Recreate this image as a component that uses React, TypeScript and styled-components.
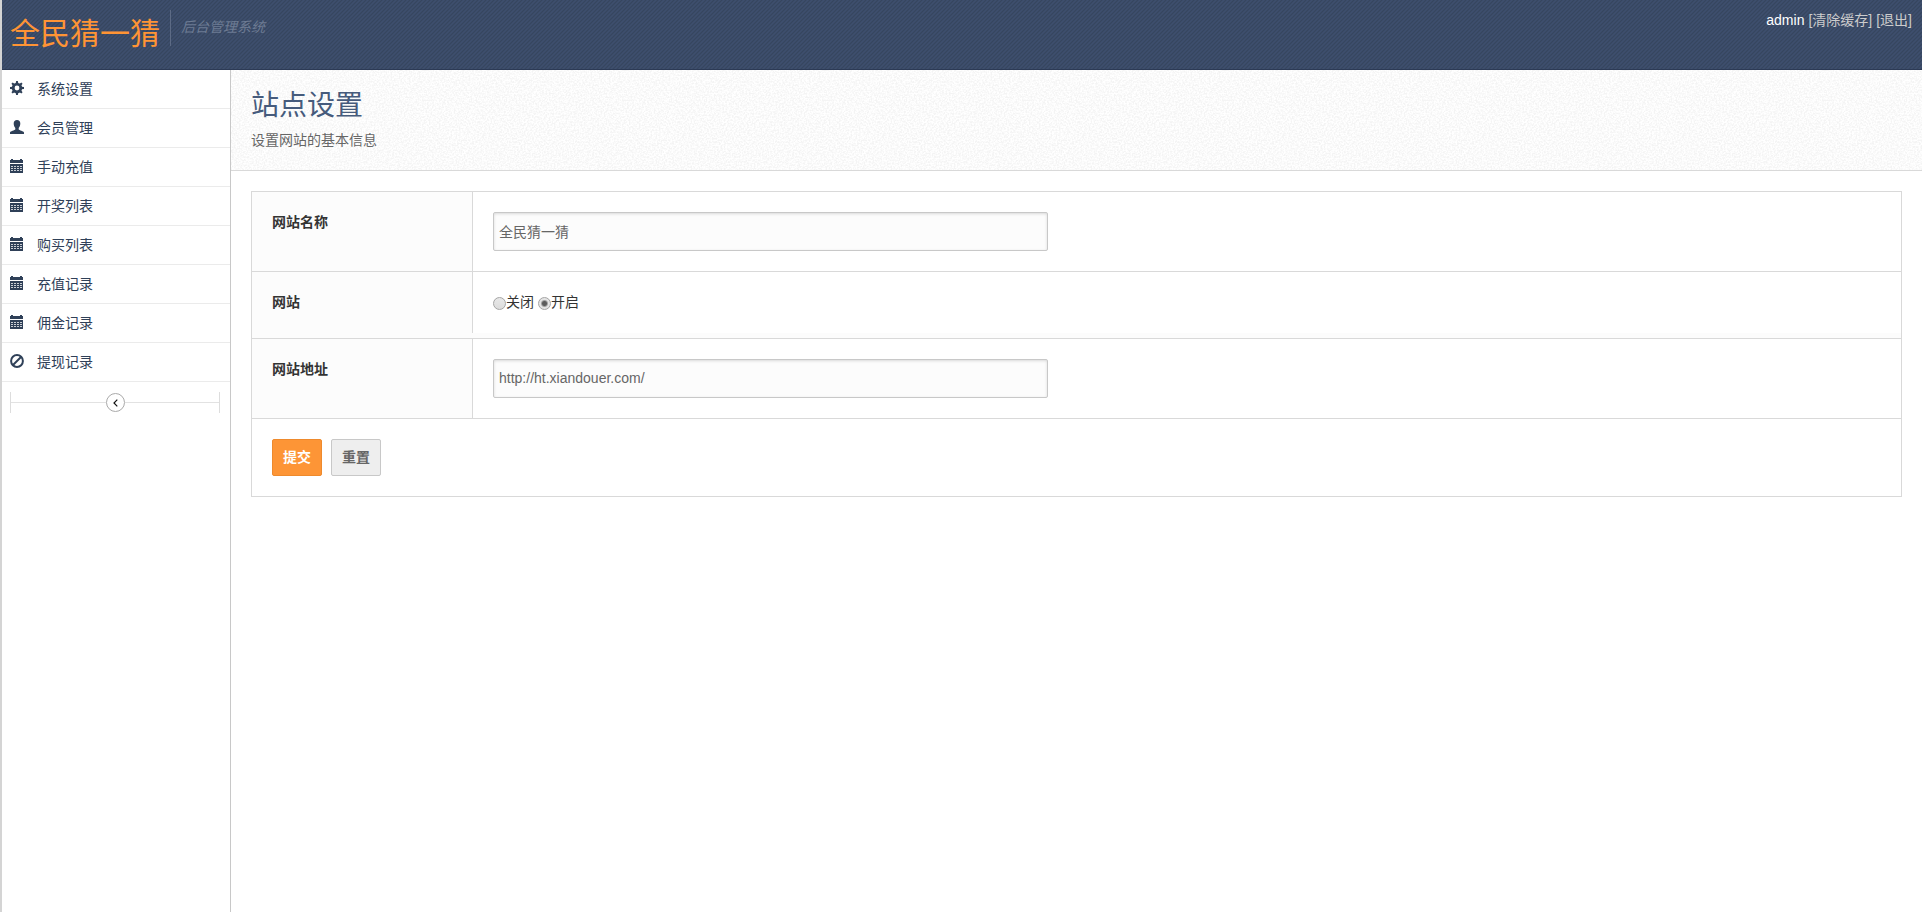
import React from 'react';
import styled, { createGlobalStyle } from 'styled-components';

const noise = encodeURIComponent(
  `<svg xmlns="http://www.w3.org/2000/svg" width="200" height="200"><filter id="n" x="0" y="0" width="100%" height="100%" color-interpolation-filters="sRGB"><feTurbulence type="fractalNoise" baseFrequency="0.6" numOctaves="2" stitchTiles="stitch"/><feColorMatrix values="0 0 0 0 0.955  0 0 0 0 0.955  0 0 0 0 0.955  3 0 0 0 -1.1"/></filter><rect width="200" height="200" filter="url(#n)"/></svg>`
);

const twill = encodeURIComponent(
  `<svg xmlns="http://www.w3.org/2000/svg" width="4" height="4" shape-rendering="crispEdges"><path fill="#36465f" d="M0 3h1v1H0zM1 2h1v1H1zM2 1h1v1H2zM3 0h1v1H3z"/><path fill="#3e4f6e" d="M0 1h1v1H0zM1 0h1v1H1zM2 3h1v1H2zM3 2h1v1H3z"/></svg>`
);

const GlobalStyle = createGlobalStyle`
  * { box-sizing: border-box; }
  body {
    margin: 0;
    background: #fff;
    color: #333;
    font: 14px/21px "Liberation Sans", Arial, "Noto Sans CJK SC", sans-serif;
  }
  a { text-decoration: none; }
`;

const Page = styled.div`
  min-height: 100vh;
  display: flex;
  flex-direction: column;
  border-left: 2px solid #d4d4d4;
`;

const Header = styled.header`
  height: 70px;
  display: flex;
  align-items: flex-start;
  padding: 10px 10px 0 8px;
  border-bottom: 1px solid #2c3a55;
  background: #3b4b68 url("data:image/svg+xml,${twill}");
`;

const Logo = styled.h1`
  margin: 0;
  padding-right: 10px;
  font-size: 30px;
  font-weight: 400;
  line-height: 48px;
  color: #ff9435;
`;

const Tagline = styled.span`
  height: 36px;
  padding: 7px 0 0 10px;
  border-left: 1px solid #5d6b85;
  font-style: italic;
  color: #6d7b93;
`;

const Account = styled.nav`
  margin-left: auto;
  display: flex;
  gap: 4px;
  color: #fff;
`;

const AccountLink = styled.a`
  color: #ccc;
`;

const Body = styled.div`
  flex: 1;
  display: flex;
`;

const Sidebar = styled.aside`
  flex: 0 0 229px;
  border-right: 1px solid #c8c8c8;
`;

const Menu = styled.ul`
  margin: 0;
  padding: 0;
  list-style: none;
`;

const MenuLink = styled.a`
  display: flex;
  align-items: center;
  gap: 13px;
  height: 39px;
  padding-left: 8px;
  border-bottom: 1px solid #ebebeb;
  color: #2f4058;
  svg { display: block; margin-bottom: 2px; }
`;

const Collapse = styled.div`
  display: flex;
  align-items: center;
  height: 21px;
  margin: 10px 10px 0 8px;
  border: solid #ddd;
  border-width: 0 1px;
  &::before, &::after {
    content: "";
    flex: 1;
    height: 1px;
    background: #e2e2e2;
  }
`;

const CollapseButton = styled.button`
  display: grid;
  place-items: center;
  width: 19px;
  height: 19px;
  padding: 0;
  border: 1px solid #aaa;
  border-radius: 50%;
  background: #fff;
  color: #111;
`;

const Main = styled.main`
  flex: 1;
  min-width: 0;
`;

const PageHead = styled.div`
  height: 101px;
  padding: 15px 20px 0;
  border-bottom: 1px solid #d9d9d9;
  background: #fff url("data:image/svg+xml,${noise}");
`;

const Title = styled.h2`
  margin: 0;
  font-size: 28px;
  font-weight: 400;
  line-height: 42px;
  color: #465b7c;
`;

const Lead = styled.p`
  margin: 3px 0 0;
  color: #666;
`;

const Form = styled.form`
  margin: 20px;
  border: 1px solid #d9d9d9;
`;

const Row = styled.div`
  display: flex;
  align-items: flex-start;
  border-bottom: 1px solid #d9d9d9;
  background: #fcfcfc;
`;

const rowLabel = `
  flex: 0 0 220px;
  margin-bottom: 5px;
  padding: 20px;
  font-weight: 700;
`;
const RowLabel = styled.label`${rowLabel}`;
const RowHeading = styled.span`${rowLabel}`;

const Field = styled.div`
  flex: 1;
  padding: 20px;
  border-left: 1px solid #d9d9d9;
  background: #fff;
`;

const TextInput = styled.input`
  display: block;
  width: 100%;
  max-width: 555px;
  height: 39px;
  padding: 0 5px 2px;
  border: 1px solid #c8c8c8;
  border-radius: 2px;
  background: #fcfcfc;
  box-shadow: inset 0 1px 3px rgba(0, 0, 0, 0.14);
  color: #666;
  font: inherit;
`;

const Options = styled.div`
  display: flex;
  gap: 4px;
`;

const Option = styled.label`
  display: flex;
  align-items: center;
`;

const Radio = styled.input`
  appearance: none;
  width: 13px;
  height: 13px;
  margin: 2px 0 0;
  border: 1px solid #a5a5a5;
  border-radius: 50%;
  background: linear-gradient(#e8e8e8, #dcdcdc);
  &:checked {
    background: radial-gradient(circle, #5c5c5c 0 2px, #e4e4e4 4px);
  }
`;

const Actions = styled.div`
  display: flex;
  gap: 9px;
  padding: 20px;
`;

const Button = styled.button<{ $primary?: boolean }>`
  width: 50px;
  height: 37px;
  padding: 0;
  border: 1px solid ${(p) => (p.$primary ? '#ee8a2d' : '#c8c8c8')};
  border-radius: 2px;
  background: ${(p) => (p.$primary ? '#fd9536' : '#eee')};
  color: ${(p) => (p.$primary ? '#fff' : '#666')};
  font: inherit;
  font-weight: 700;
`;

type IconName = 'cog' | 'user' | 'calendar' | 'ban';

const Icon = ({ name }: { name: IconName }) => (
  <svg width="14" height="14" viewBox="0 0 14 14" fill="currentColor" aria-hidden="true">
    {name === 'cog' && (
      <>
        <circle cx="7" cy="7" r="3.8" fill="none" stroke="currentColor" strokeWidth="2.8" />
        {[0, 45, 90, 135, 180, 225, 270, 315].map((a) => (
          <path key={a} d="M5.700 2.600 6.100 0h1.800l.4 2.600z" transform={`rotate(${a} 7 7)`} />
        ))}
      </>
    )}
    {name === 'user' && (
      <path d="M7 0C4.900 0 3.700 1.400 3.700 3.500c0 1.900.6 3.500 1.600 4.400v1.500C4.900 10.200.2 10.900 0 12.600V14h14v-1.400c-.2-1.700-4.900-2.400-5.300-3.200V7.900c1-.9 1.600-2.500 1.600-4.400C10.300 1.400 9.100 0 7 0z" />
    )}
    {name === 'calendar' && (
      <>
        <path d="M0 1h1V0h2v1h7V0h2v1h1v3H0zM0 5h13v9H0z" />
        <path
          d="M1 7.500h11M1 9.500h11M1 11.500h11"
          stroke="#fff"
          strokeOpacity="0.75"
          strokeWidth="1"
          strokeDasharray="2 1"
        />
      </>
    )}
    {name === 'ban' && (
      <g fill="none" stroke="currentColor" strokeWidth="2">
        <circle cx="7" cy="7" r="5.9" />
        <path d="M11 3 3 11" />
      </g>
    )}
  </svg>
);

const menu: { icon: IconName; text: string }[] = [
  { icon: 'cog', text: '系统设置' },
  { icon: 'user', text: '会员管理' },
  { icon: 'calendar', text: '手动充值' },
  { icon: 'calendar', text: '开奖列表' },
  { icon: 'calendar', text: '购买列表' },
  { icon: 'calendar', text: '充值记录' },
  { icon: 'calendar', text: '佣金记录' },
  { icon: 'ban', text: '提现记录' },
];

export default function App() {
  return (
    <>
      <GlobalStyle />
      <Page>
        <Header>
          <Logo>全民猜一猜</Logo>
          <Tagline>后台管理系统</Tagline>
          <Account>
            <span>admin</span>
            <AccountLink href="#cache">[清除缓存]</AccountLink>
            <AccountLink href="#logout">[退出]</AccountLink>
          </Account>
        </Header>
        <Body>
          <Sidebar>
            <Menu>
              {menu.map((item) => (
                <li key={item.text}>
                  <MenuLink href="#menu">
                    <Icon name={item.icon} />
                    {item.text}
                  </MenuLink>
                </li>
              ))}
            </Menu>
            <Collapse>
              <CollapseButton type="button" aria-label="收起菜单">
                <svg width="5" height="8" viewBox="0 0 5 8" fill="none" stroke="currentColor" strokeWidth="1.2">
                  <path d="M4.300.7 1 4l3.300 3.300" />
                </svg>
              </CollapseButton>
            </Collapse>
          </Sidebar>
          <Main>
            <PageHead>
              <Title>站点设置</Title>
              <Lead>设置网站的基本信息</Lead>
            </PageHead>
            <Form>
              <Row>
                <RowLabel htmlFor="site-name">网站名称</RowLabel>
                <Field>
                  <TextInput id="site-name" type="text" defaultValue="全民猜一猜" />
                </Field>
              </Row>
              <Row>
                <RowHeading id="site-state">网站</RowHeading>
                <Field>
                  <Options role="radiogroup" aria-labelledby="site-state">
                    <Option>
                      <Radio type="radio" name="state" value="0" />
                      关闭
                    </Option>
                    <Option>
                      <Radio type="radio" name="state" value="1" defaultChecked />
                      开启
                    </Option>
                  </Options>
                </Field>
              </Row>
              <Row>
                <RowLabel htmlFor="site-url">网站地址</RowLabel>
                <Field>
                  <TextInput id="site-url" type="text" defaultValue="http://ht.xiandouer.com/" />
                </Field>
              </Row>
              <Actions>
                <Button type="submit" $primary>
                  提交
                </Button>
                <Button type="reset">重置</Button>
              </Actions>
            </Form>
          </Main>
        </Body>
      </Page>
    </>
  );
}
